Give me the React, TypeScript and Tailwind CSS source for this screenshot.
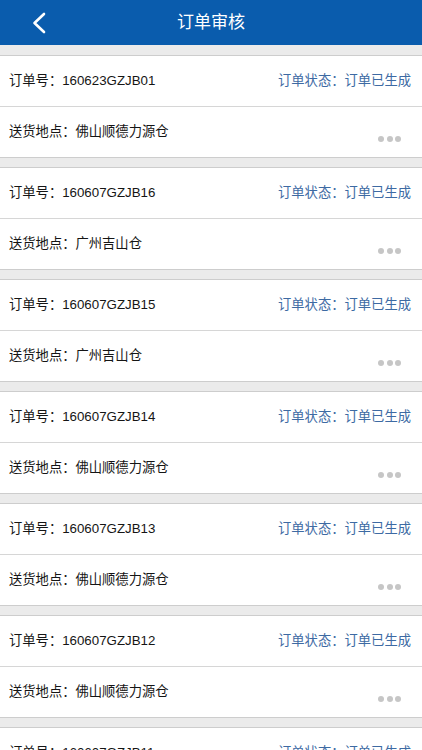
import React from "react";

const orders = [
  { no: "160623GZJB01", addr: "佛山顺德力源仓" },
  { no: "160607GZJB16", addr: "广州吉山仓" },
  { no: "160607GZJB15", addr: "广州吉山仓" },
  { no: "160607GZJB14", addr: "佛山顺德力源仓" },
  { no: "160607GZJB13", addr: "佛山顺德力源仓" },
  { no: "160607GZJB12", addr: "佛山顺德力源仓" },
  { no: "160607GZJB11", addr: "佛山顺德力源仓" },
];

export default function App() {
  return (
    <div
      className="w-[422px] h-[750px] overflow-hidden bg-[#ebebeb]"
      style={{ fontFamily: '"Liberation Sans", "Noto Sans CJK SC", sans-serif' }}
    >
      <header className="h-[45px] bg-[#0a5cad] grid grid-cols-[70px_1fr_70px] items-center">
        <div className="pl-[31px] flex items-center">
          <svg width="16" height="22" viewBox="0 0 16 22" fill="none">
            <path d="M13 2 L3.5 11 L13 20" stroke="white" strokeWidth="2.6" strokeLinecap="round" strokeLinejoin="round" />
          </svg>
        </div>
        <div className="text-center text-white text-[17px] leading-none">订单审核</div>
        <div />
      </header>
      <div className="pt-[10px] flex flex-col gap-[9px]">
        {orders.map((o) => (
          <div key={o.no} className="bg-white border-y border-[#cdcdcd]">
            <div className="h-[51px] flex items-center justify-between pl-[9px] pr-[11px] border-b border-[#d6d6d6] text-[13.3px]">
              <span className="text-[#151515]">订单号：{o.no}</span>
              <span className="text-[#3d6aa3]">订单状态：订单已生成</span>
            </div>
            <div className="h-[50px] flex items-center justify-between pl-[9px] pr-[21px] text-[13.3px]">
              <span className="text-[#151515]">送货地点：{o.addr}</span>
              <div className="flex gap-[2.5px] mt-[14px]">
                <span className="w-[6px] h-[6px] rounded-full bg-[#c6c6c6]" />
                <span className="w-[6px] h-[6px] rounded-full bg-[#c6c6c6]" />
                <span className="w-[6px] h-[6px] rounded-full bg-[#c6c6c6]" />
              </div>
            </div>
          </div>
        ))}
      </div>
    </div>
  );
}
